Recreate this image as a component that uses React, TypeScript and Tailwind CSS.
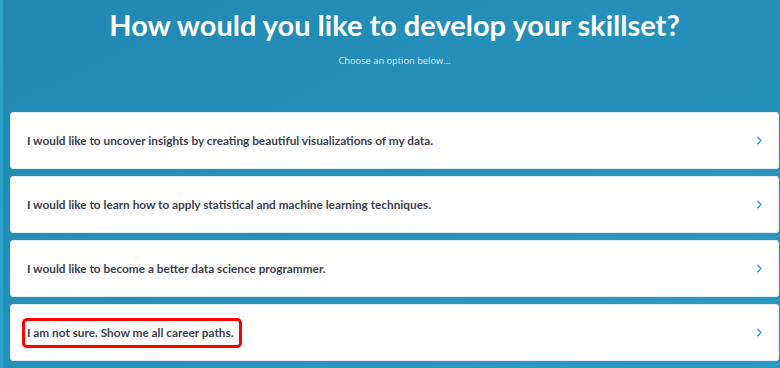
import { ChevronRight } from "lucide-react";

const options = [
  "I would like to uncover insights by creating beautiful visualizations of my data.",
  "I would like to learn how to apply statistical and machine learning techniques.",
  "I would like to become a better data science programmer.",
  "I am not sure. Show me all career paths.",
];

export default function App() {
  return (
    <div className="flex h-[368px] w-[780px] overflow-hidden bg-gradient-to-br from-[#2188b3] to-[#2a9ac3] font-['Lato',sans-serif]">
      <div className="w-[3px] shrink-0 bg-[#2fa2c9]" />
      <div className="flex flex-1 flex-col pl-[7px] pr-[1px]">
        <div className="flex h-[112px] flex-col items-center pt-[7px]">
          <h1 className="text-[29px] font-bold leading-[35px] text-white">
            How would you like to develop your skillset?
          </h1>
          <p className="mt-[12px] font-['Open_Sans',sans-serif] text-[9.3px] text-[#dcecf4]">
            Choose an option below...
          </p>
        </div>
        <div className="flex flex-col gap-[7px]">
          {options.map((text, i) => (
            <div
              key={i}
              className="flex h-[57px] items-center justify-between rounded-[3px] border border-[#e4eef3] bg-white pl-[16px] pr-[12px]"
            >
              <span className="relative text-[11.8px] font-bold leading-[14px] text-[#3c404f]">
                {text}
                {i === 3 && (
                  <span className="absolute -left-[5px] -right-[9px] -top-[8px] -bottom-[8px] rounded-[5px] border-[3px] border-[#ff0000]" />
                )}
              </span>
              <ChevronRight className="h-[13px] w-[13px] text-[#33a8dc]" strokeWidth={3} />
            </div>
          ))}
        </div>
      </div>
    </div>
  );
}
